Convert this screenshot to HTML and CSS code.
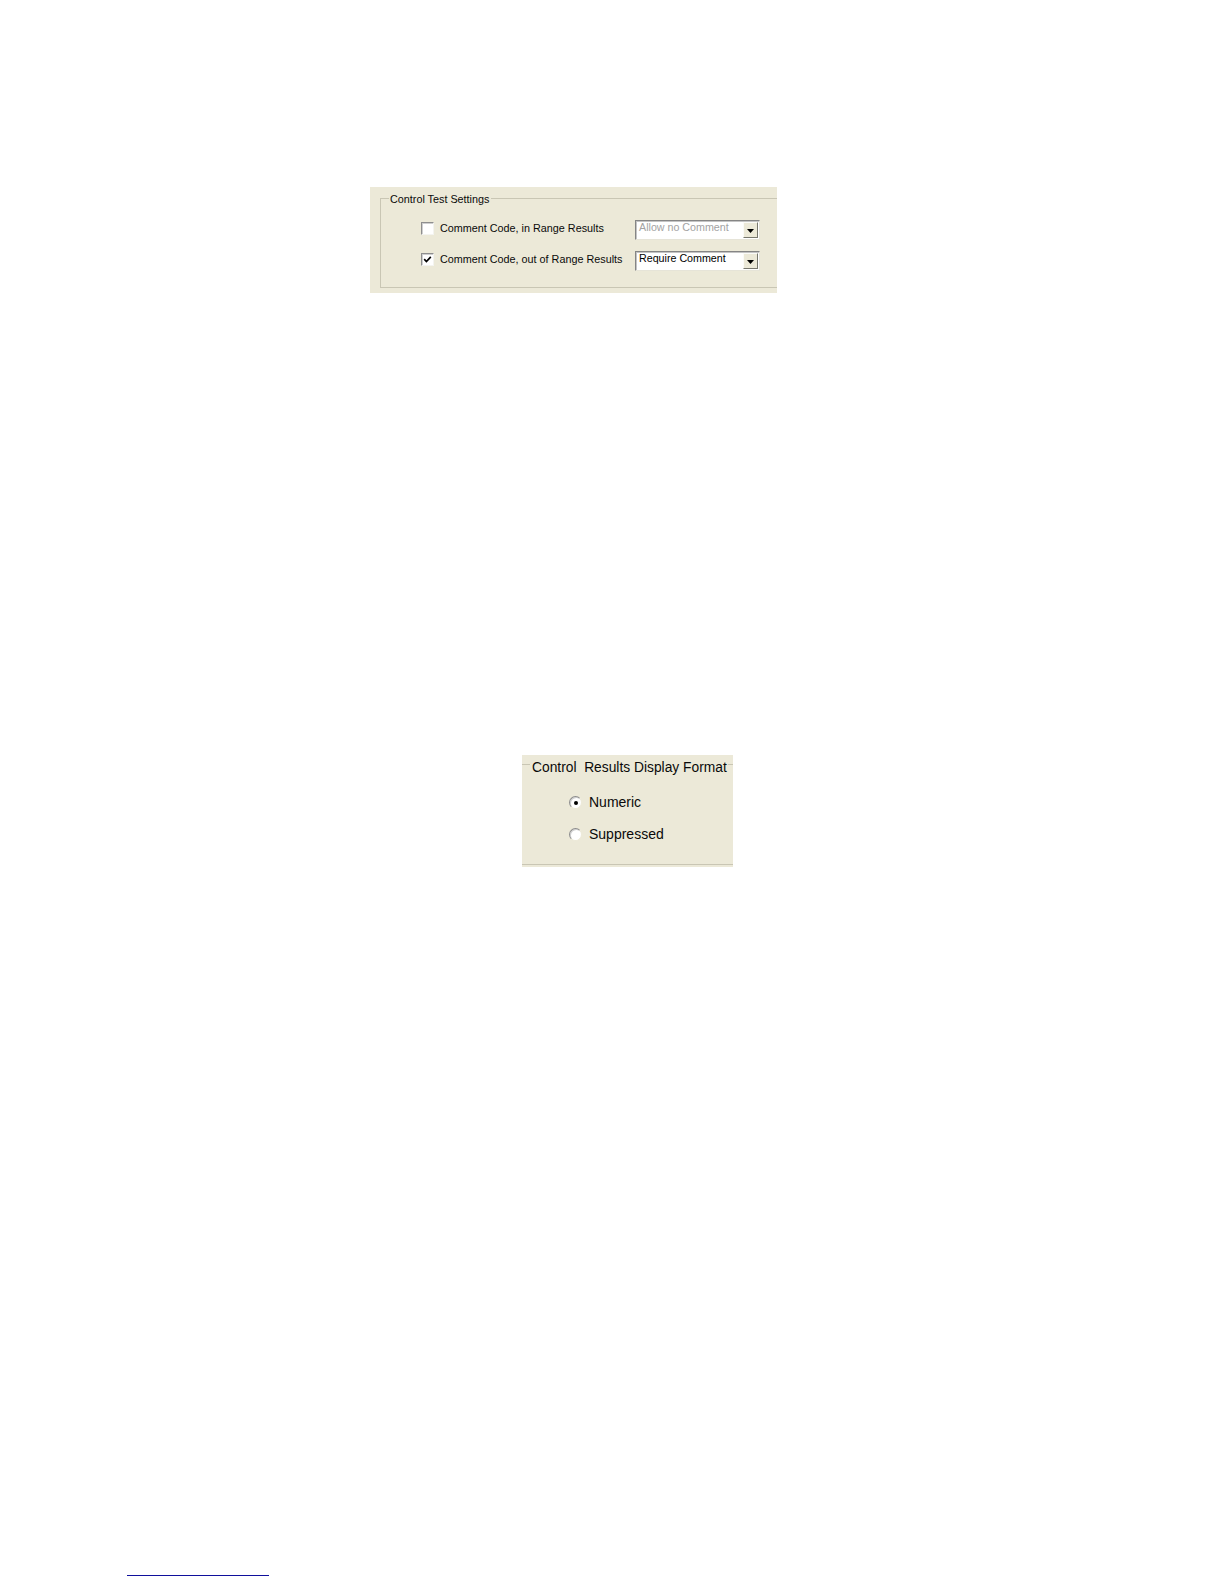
FILE: index.html
```html
<!DOCTYPE html>
<html>
<head>
<meta charset="utf-8">
<title>Control Settings</title>
<link rel="stylesheet" href="styles.css">
</head>
<body>
<div class="page">
  <div class="panel panel-test">
    <div class="group group-test">
      <span class="legend legend-test">Control Test Settings</span>
      <div class="rows">
        <div class="row">
          <span class="check"></span>
          <span class="label">Comment Code, in Range Results</span>
          <div class="combo disabled">
            <span class="combo-text">Allow no Comment</span>
            <span class="combo-btn"><svg width="7" height="4" viewBox="0 0 7 4"><polygon points="0,0 7,0 3.5,4" fill="#000"/></svg></span>
          </div>
        </div>
        <div class="row">
          <span class="check checked"><svg width="11" height="11" viewBox="0 0 11 11"><path d="M2.2 5.2 L4.4 7.5 L8.8 2.9" fill="none" stroke="#000" stroke-width="1.7"/></svg></span>
          <span class="label">Comment Code, out of Range Results</span>
          <div class="combo">
            <span class="combo-text">Require Comment</span>
            <span class="combo-btn"><svg width="7" height="4" viewBox="0 0 7 4"><polygon points="0,0 7,0 3.5,4" fill="#000"/></svg></span>
          </div>
        </div>
      </div>
    </div>
  </div>

  <div class="panel panel-format">
    <div class="group group-format">
      <span class="legend legend-format">Control&nbsp; Results Display Format</span>
      <div class="radios">
        <div class="radio-row">
          <span class="radio"><span class="dot"></span></span>
          <span class="radio-label">Numeric</span>
        </div>
        <div class="radio-row">
          <span class="radio"></span>
          <span class="radio-label">Suppressed</span>
        </div>
      </div>
    </div>
  </div>

  <div class="footnote-rule"></div>
</div>
</body>
</html>
```

FILE: styles.css
```css
html, body {
  margin: 0;
  padding: 0;
  background: #ffffff;
}

body {
  font-family: "Liberation Sans", Arial, sans-serif;
  color: #000;
}

.page {
  width: 1224px;
}

.panel {
  background: #ece9d8;
  overflow: hidden;
  box-sizing: border-box;
}

.group {
  position: relative;
  box-sizing: border-box;
  border: 1px solid #c9c6b4;
}

.legend {
  position: absolute;
  background: #ece9d8;
  white-space: nowrap;
  color: #0a0a0a;
}

/* ---------- Control Test Settings ---------- */
.panel-test {
  margin: 187px 0 0 370px;
  width: 407px;
  height: 106px;
  padding: 11px 0 0 10px;
}

.group-test {
  width: 520px;
  height: 90px;
  padding: 21px 0 0 40px;
}

.legend-test {
  left: 8px;
  top: -6px;
  padding: 0 2px 0 1px;
  font-size: 10.8px;
  line-height: 13px;
}

.rows {
  display: flex;
  flex-direction: column;
  gap: 11px;
}

.row {
  display: flex;
  align-items: flex-start;
  height: 20px;
}

.check {
  width: 13px;
  height: 13px;
  box-sizing: border-box;
  background: #fff;
  border: 1px solid;
  border-color: #8e8e8e #f4f4f0 #f4f4f0 #8e8e8e;
  box-shadow: inset 1px 1px 0 #cfcfcf;
  margin: 2px 6px 0 0;
  display: flex;
  align-items: center;
  justify-content: center;
}

.label {
  width: 195px;
  font-size: 10.8px;
  line-height: 13px;
  margin-top: 2px;
  white-space: nowrap;
  color: #0a0a0a;
}

.combo {
  width: 125px;
  height: 20px;
  box-sizing: border-box;
  background: #fff;
  border: 1px solid;
  border-color: #858585 #e6e4d8 #e6e4d8 #858585;
  box-shadow: inset 1px 1px 0 #c4c4c4;
  display: flex;
  align-items: flex-start;
  padding: 0 1px 0 3px;
}

.combo-text {
  flex: 1;
  font-size: 10.7px;
  line-height: 13px;
  white-space: nowrap;
  color: #000;
}

.combo.disabled .combo-text {
  color: #a3a3a3;
}

.combo-btn {
  align-self: center;
  width: 15px;
  height: 16px;
  box-sizing: border-box;
  background: #ece9d8;
  border: 1px solid;
  border-color: #fbfbf8 #77776e #77776e #fbfbf8;
  display: flex;
  align-items: center;
  justify-content: center;
  padding-top: 2px;
}

/* ---------- Control Results Display Format ---------- */
.panel-format {
  margin: 462px 0 0 522px;
  width: 211px;
  height: 112px;
  padding-top: 9px;
}

.group-format {
  margin-left: -3px;
  width: 300px;
  height: 101px;
  padding: 29px 0 0 49px;
}

.legend-format {
  left: 10px;
  top: -6px;
  padding: 0 1px 0 2px;
  font-size: 13.8px;
  line-height: 17px;
}

.radios {
  display: flex;
  flex-direction: column;
  gap: 15px;
}

.radio-row {
  display: flex;
  align-items: center;
  height: 17px;
}

.radio {
  width: 13px;
  height: 13px;
  box-sizing: border-box;
  border-radius: 50%;
  background: #fff;
  border: 1px solid;
  border-color: #8c8c8c #ece9d8 #ece9d8 #8c8c8c;
  box-shadow: inset 1px 1px 0 #d0d0d0;
  margin-right: 7px;
  display: flex;
  align-items: center;
  justify-content: center;
}

.dot {
  width: 4px;
  height: 4px;
  border-radius: 50%;
  background: #000;
}

.radio-label {
  font-size: 14px;
  line-height: 17px;
  white-space: nowrap;
  color: #0a0a0a;
}

/* ---------- footnote rule ---------- */
.footnote-rule {
  margin: 708px 0 0 127px;
  width: 142px;
  height: 0;
  border-top: 1px solid #10109c;
}
```
